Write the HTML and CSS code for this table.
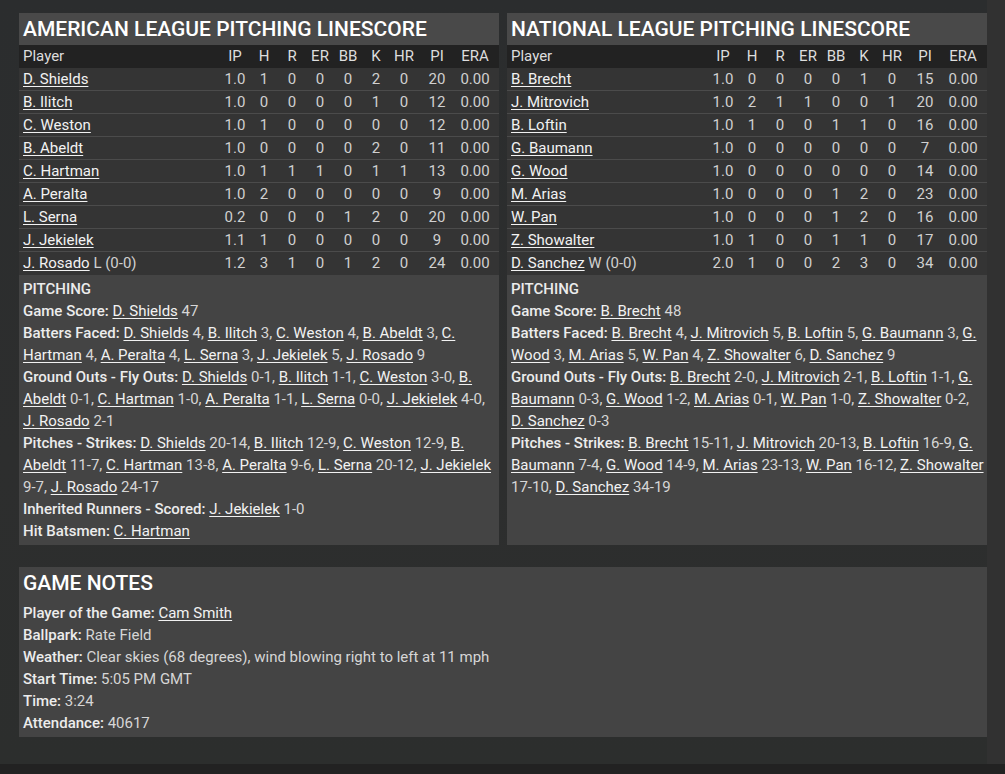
FILE: index.html
```html
<!DOCTYPE html>
<html>
<head>
<meta charset="utf-8">
<link rel="stylesheet" href="styles.css">
</head>
<body>
<div class="screen">
  <div class="main">
    <div class="columns">
      <section class="panel">
        <h2 class="band">AMERICAN LEAGUE PITCHING LINESCORE</h2>
        <table class="line">
          <thead>
            <tr><th class="pl">Player</th><th class="c-ip">IP</th><th class="c">H</th><th class="c">R</th><th class="c">ER</th><th class="c">BB</th><th class="c">K</th><th class="c">HR</th><th class="c-pi">PI</th><th class="c-era">ERA</th></tr>
          </thead>
          <tbody>
            <tr><td class="pl"><a>D. Shields</a></td><td>1.0</td><td>1</td><td>0</td><td>0</td><td>0</td><td>2</td><td>0</td><td>20</td><td class="c-era">0.00</td></tr>
            <tr><td class="pl"><a>B. Ilitch</a></td><td>1.0</td><td>0</td><td>0</td><td>0</td><td>0</td><td>1</td><td>0</td><td>12</td><td class="c-era">0.00</td></tr>
            <tr><td class="pl"><a>C. Weston</a></td><td>1.0</td><td>1</td><td>0</td><td>0</td><td>0</td><td>0</td><td>0</td><td>12</td><td class="c-era">0.00</td></tr>
            <tr><td class="pl"><a>B. Abeldt</a></td><td>1.0</td><td>0</td><td>0</td><td>0</td><td>0</td><td>2</td><td>0</td><td>11</td><td class="c-era">0.00</td></tr>
            <tr><td class="pl"><a>C. Hartman</a></td><td>1.0</td><td>1</td><td>1</td><td>1</td><td>0</td><td>1</td><td>1</td><td>13</td><td class="c-era">0.00</td></tr>
            <tr><td class="pl"><a>A. Peralta</a></td><td>1.0</td><td>2</td><td>0</td><td>0</td><td>0</td><td>0</td><td>0</td><td>9</td><td class="c-era">0.00</td></tr>
            <tr><td class="pl"><a>L. Serna</a></td><td>0.2</td><td>0</td><td>0</td><td>0</td><td>1</td><td>2</td><td>0</td><td>20</td><td class="c-era">0.00</td></tr>
            <tr><td class="pl"><a>J. Jekielek</a></td><td>1.1</td><td>1</td><td>0</td><td>0</td><td>0</td><td>0</td><td>0</td><td>9</td><td class="c-era">0.00</td></tr>
            <tr class="last"><td class="pl"><a>J. Rosado</a> L (0-0)</td><td>1.2</td><td>3</td><td>1</td><td>0</td><td>1</td><td>2</td><td>0</td><td>24</td><td class="c-era">0.00</td></tr>
          </tbody>
        </table>
        <div class="notes">
          <div class="head">PITCHING</div>
          <p><b>Game Score:</b> <a>D. Shields</a> 47</p>
          <p><b>Batters Faced:</b> <a>D. Shields</a> 4, <a>B. Ilitch</a> 3, <a>C. Weston</a> 4, <a>B. Abeldt</a> 3, <a>C. Hartman</a> 4, <a>A. Peralta</a> 4, <a>L. Serna</a> 3, <a>J. Jekielek</a> 5, <a>J. Rosado</a> 9</p>
          <p><b>Ground Outs - Fly Outs:</b> <a>D. Shields</a> 0-1, <a>B. Ilitch</a> 1-1, <a>C. Weston</a> 3-0, <a>B. Abeldt</a> 0-1, <a>C. Hartman</a> 1-0, <a>A. Peralta</a> 1-1, <a>L. Serna</a> 0-0, <a>J. Jekielek</a> 4-0, <a>J. Rosado</a> 2-1</p>
          <p><b>Pitches - Strikes:</b> <a>D. Shields</a> 20-14, <a>B. Ilitch</a> 12-9, <a>C. Weston</a> 12-9, <a>B. Abeldt</a> 11-7, <a>C. Hartman</a> 13-8, <a>A. Peralta</a> 9-6, <a>L. Serna</a> 20-12, <a>J. Jekielek</a> 9-7, <a>J. Rosado</a> 24-17</p>
          <p><b>Inherited Runners - Scored:</b> <a>J. Jekielek</a> 1-0</p>
          <p><b>Hit Batsmen:</b> <a>C. Hartman</a></p>
        </div>
      </section>
      <section class="panel">
        <h2 class="band">NATIONAL LEAGUE PITCHING LINESCORE</h2>
        <table class="line">
          <thead>
            <tr><th class="pl">Player</th><th class="c-ip">IP</th><th class="c">H</th><th class="c">R</th><th class="c">ER</th><th class="c">BB</th><th class="c">K</th><th class="c">HR</th><th class="c-pi">PI</th><th class="c-era">ERA</th></tr>
          </thead>
          <tbody>
            <tr><td class="pl"><a>B. Brecht</a></td><td>1.0</td><td>0</td><td>0</td><td>0</td><td>0</td><td>1</td><td>0</td><td>15</td><td class="c-era">0.00</td></tr>
            <tr><td class="pl"><a>J. Mitrovich</a></td><td>1.0</td><td>2</td><td>1</td><td>1</td><td>0</td><td>0</td><td>1</td><td>20</td><td class="c-era">0.00</td></tr>
            <tr><td class="pl"><a>B. Loftin</a></td><td>1.0</td><td>1</td><td>0</td><td>0</td><td>1</td><td>1</td><td>0</td><td>16</td><td class="c-era">0.00</td></tr>
            <tr><td class="pl"><a>G. Baumann</a></td><td>1.0</td><td>0</td><td>0</td><td>0</td><td>0</td><td>0</td><td>0</td><td>7</td><td class="c-era">0.00</td></tr>
            <tr><td class="pl"><a>G. Wood</a></td><td>1.0</td><td>0</td><td>0</td><td>0</td><td>0</td><td>0</td><td>0</td><td>14</td><td class="c-era">0.00</td></tr>
            <tr><td class="pl"><a>M. Arias</a></td><td>1.0</td><td>0</td><td>0</td><td>0</td><td>1</td><td>2</td><td>0</td><td>23</td><td class="c-era">0.00</td></tr>
            <tr><td class="pl"><a>W. Pan</a></td><td>1.0</td><td>0</td><td>0</td><td>0</td><td>1</td><td>2</td><td>0</td><td>16</td><td class="c-era">0.00</td></tr>
            <tr><td class="pl"><a>Z. Showalter</a></td><td>1.0</td><td>1</td><td>0</td><td>0</td><td>1</td><td>1</td><td>0</td><td>17</td><td class="c-era">0.00</td></tr>
            <tr class="last"><td class="pl"><a>D. Sanchez</a> W (0-0)</td><td>2.0</td><td>1</td><td>0</td><td>0</td><td>2</td><td>3</td><td>0</td><td>34</td><td class="c-era">0.00</td></tr>
          </tbody>
        </table>
        <div class="notes">
          <div class="head">PITCHING</div>
          <p><b>Game Score:</b> <a>B. Brecht</a> 48</p>
          <p><b>Batters Faced:</b> <a>B. Brecht</a> 4, <a>J. Mitrovich</a> 5, <a>B. Loftin</a> 5, <a>G. Baumann</a> 3, <a>G. Wood</a> 3, <a>M. Arias</a> 5, <a>W. Pan</a> 4, <a>Z. Showalter</a> 6, <a>D. Sanchez</a> 9</p>
          <p><b>Ground Outs - Fly Outs:</b> <a>B. Brecht</a> 2-0, <a>J. Mitrovich</a> 2-1, <a>B. Loftin</a> 1-1, <a>G. Baumann</a> 0-3, <a>G. Wood</a> 1-2, <a>M. Arias</a> 0-1, <a>W. Pan</a> 1-0, <a>Z. Showalter</a> 0-2, <a>D. Sanchez</a> 0-3</p>
          <p><b>Pitches - Strikes:</b> <a>B. Brecht</a> 15-11, <a>J. Mitrovich</a> 20-13, <a>B. Loftin</a> 16-9, <a>G. Baumann</a> 7-4, <a>G. Wood</a> 14-9, <a>M. Arias</a> 23-13, <a>W. Pan</a> 16-12, <a>Z. Showalter</a> 17-10, <a>D. Sanchez</a> 34-19</p>
        </div>
      </section>
    </div>
    <section class="game">
      <h2 class="gtitle">GAME NOTES</h2>
      <div class="gbody">
        <p><b>Player of the Game:</b> <a>Cam Smith</a></p>
        <p><b>Ballpark:</b> Rate Field</p>
        <p><b>Weather:</b> Clear skies (68 degrees), wind blowing right to left at 11 mph</p>
        <p><b>Start Time:</b> 5:05 PM GMT</p>
        <p><b>Time:</b> 3:24</p>
        <p><b>Attendance:</b> 40617</p>
      </div>
    </section>
  </div>
  <div class="track"></div>
</div>
<div class="bottombar"></div>
</body>
</html>
```

FILE: styles.css
```css
html, body {
  margin: 0;
  padding: 0;
}
body {
  background: #2c2e2f;
  font-family: Roboto, "Liberation Sans", sans-serif;
  font-size: 15px;
  color: #d6d6d6;
  width: 1005px;
  height: 774px;
  overflow: hidden;
}
.screen {
  display: flex;
  height: 764px;
}
.main {
  width: 968px;
  padding: 13px 0 0 19px;
  background: linear-gradient(180deg, #2b2d2e 0%, #2d2e2e 60%, #2c2e2d 100%);
}
.track {
  width: 18px;
  background: #313131;
}
.bottombar {
  height: 10px;
  background: #222222;
}
.columns {
  display: grid;
  grid-template-columns: 480px 480px;
  column-gap: 8px;
}
.panel {
  display: flex;
  flex-direction: column;
  background: #444444;
}
.band {
  margin: 0;
  height: 32px;
  line-height: 32px;
  padding-left: 4px;
  background: #494949;
  color: #ffffff;
  font-size: 21px;
  font-weight: 500;
}
table.line {
  width: 480px;
  table-layout: fixed;
  border-collapse: separate;
  border-spacing: 0;
  background: #343434;
}
table.line th {
  background: #222222;
  color: #dddddd;
  font-weight: 400;
  line-height: 23px;
  height: 23px;
  padding: 0;
  text-align: center;
}
table.line td {
  padding: 0;
  height: 23px;
  line-height: 22px;
  border-bottom: 1px solid #4b4b4b;
  text-align: center;
  color: #d0d0d0;
  white-space: nowrap;
}
table.line tr.last td {
  border-bottom: 0;
  height: 23px;
  line-height: 23px;
}
table.line .pl {
  text-align: left;
  padding-left: 4px;
}
table.line th, table.line td {
  box-sizing: border-box;
}
.c-ip { width: 30px; }
.c { width: 28px; }
.c-pi { width: 38px; }
.c-era { width: 43px; }
table.line .c-era { padding-right: 5px; }
a {
  color: #f2f2f2;
  text-decoration: underline;
  text-underline-offset: 2px;
}
.notes {
  padding: 3px 2px 3px 4px;
  line-height: 22px;
  flex: 1;
}
.notes .head {
  font-weight: 500;
  color: #ececec;
}
p {
  margin: 0;
}
b {
  font-weight: 500;
  color: #ececec;
}
.game {
  margin-top: 22px;
  width: 968px;
  background: #444444;
}
.gtitle {
  margin: 0;
  height: 32px;
  line-height: 32px;
  padding-left: 4px;
  color: #ffffff;
  font-size: 21px;
  font-weight: 500;
}
.gbody {
  padding: 3px 4px 3px 4px;
  line-height: 22px;
}
```
